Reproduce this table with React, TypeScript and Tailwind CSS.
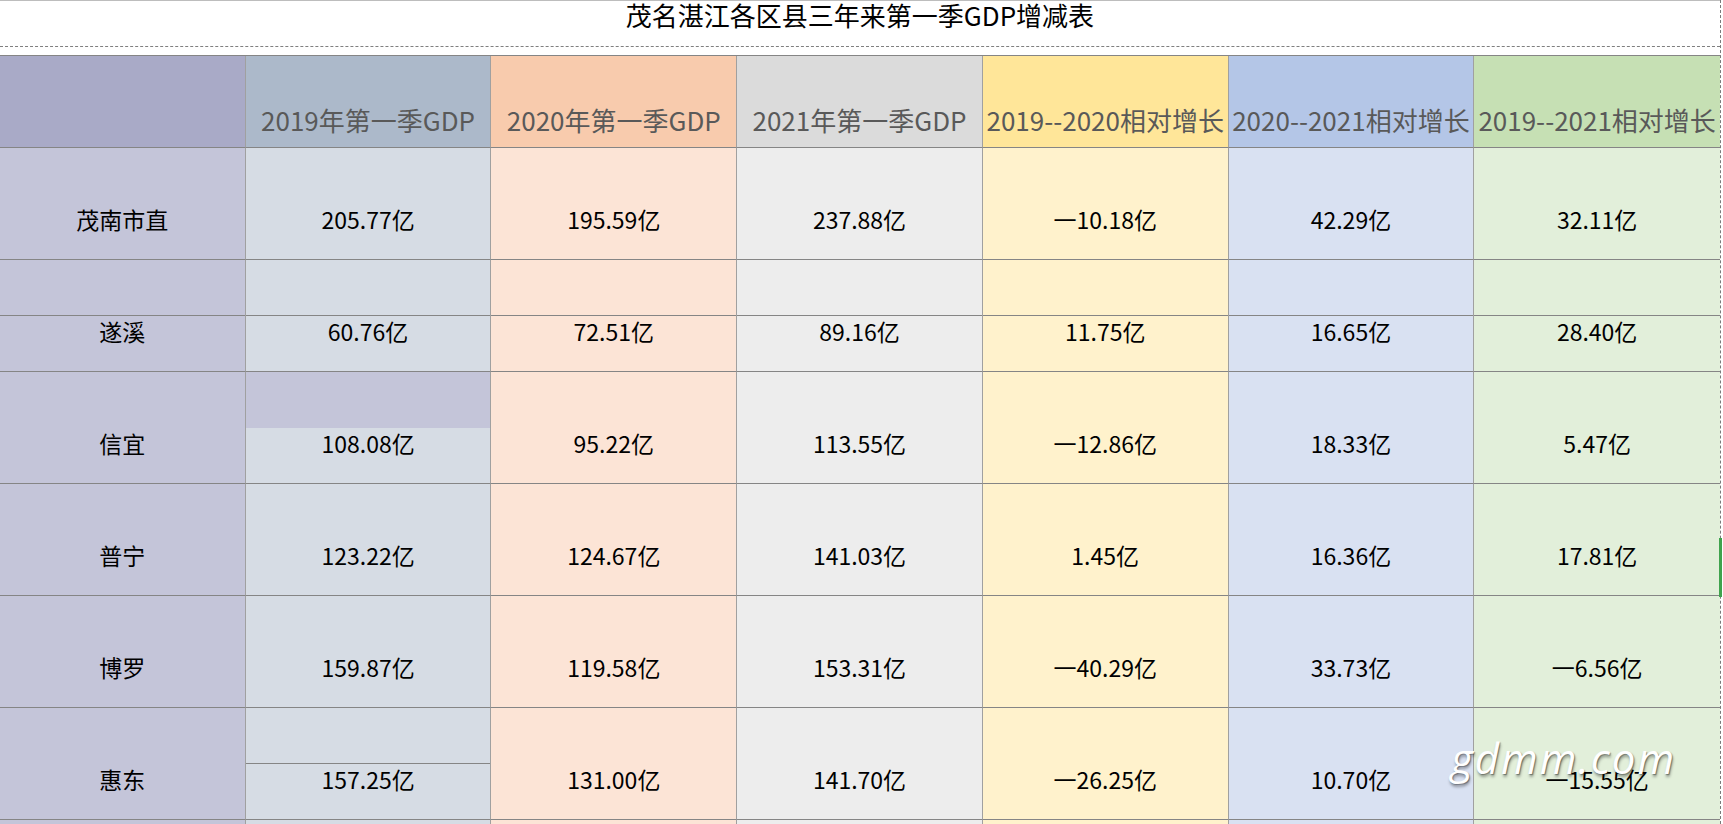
const cols = [
  { head: '', headBg: 'bg-[#a9aac7]', bodyBg: 'bg-[#c4c5d9]' },
  { head: '2019年第一季GDP', headBg: 'bg-[#acb9ca]', bodyBg: 'bg-[#d6dce4]' },
  { head: '2020年第一季GDP', headBg: 'bg-[#f8cbad]', bodyBg: 'bg-[#fce4d6]' },
  { head: '2021年第一季GDP', headBg: 'bg-[#dbdbdb]', bodyBg: 'bg-[#ededed]' },
  { head: '2019--2020相对增长', headBg: 'bg-[#ffe699]', bodyBg: 'bg-[#fff2cc]' },
  { head: '2020--2021相对增长', headBg: 'bg-[#b4c6e7]', bodyBg: 'bg-[#d9e1f2]' },
  { head: '2019--2021相对增长', headBg: 'bg-[#c6e0b4]', bodyBg: 'bg-[#e2efda]' },
];

type Row = {
  cells: string[];
  // which columns get a line halfway down the cell
  splitLine?: number[];
  // columns whose top half is shaded like the first column
  shadeTop?: number[];
};

const rows: Row[] = [
  { cells: ['茂南市直', '205.77亿', '195.59亿', '237.88亿', '一10.18亿', '42.29亿', '32.11亿'] },
  { cells: ['遂溪', '60.76亿', '72.51亿', '89.16亿', '11.75亿', '16.65亿', '28.40亿'], splitLine: [0, 1, 2, 3, 4, 5, 6] },
  { cells: ['信宜', '108.08亿', '95.22亿', '113.55亿', '一12.86亿', '18.33亿', '5.47亿'], shadeTop: [1] },
  { cells: ['普宁', '123.22亿', '124.67亿', '141.03亿', '1.45亿', '16.36亿', '17.81亿'] },
  { cells: ['博罗', '159.87亿', '119.58亿', '153.31亿', '一40.29亿', '33.73亿', '一6.56亿'] },
  { cells: ['惠东', '157.25亿', '131.00亿', '141.70亿', '一26.25亿', '10.70亿', '一15.55亿'], splitLine: [1] },
  { cells: ['', '', '', '', '', '', ''] },
];

function BodyCell({ text, col, split, shade }: { text: string; col: number; split: boolean; shade: boolean }) {
  const last = col === cols.length - 1;
  return (
    <div
      className={`h-[112px] flex flex-col border-b border-b-[#858585] ${last ? '' : 'border-r border-r-[#a0a0a0]'} ${cols[col].bodyBg}`}
    >
      <div
        className={`h-[56px] shrink-0 ${split ? 'border-b border-b-[#858585]' : ''} ${shade ? 'bg-[#c4c5d9]' : ''}`}
      />
      <div className="text-center whitespace-nowrap text-[23px] leading-[30px] text-black">{text}</div>
    </div>
  );
}

export default function App() {
  return (
    <div className="relative w-[1723px] h-[824px] overflow-hidden bg-white font-['Noto_Sans_CJK_SC',sans-serif]">
      <div className="w-[1721px] h-[824px] border-r border-dashed border-r-[#7a7a7a]">
        <div className="h-[46px] border-t border-t-[#bdbdbd] text-center text-[26px] leading-[28px] text-black">
          茂名湛江各区县三年来第一季GDP增减表
        </div>
        <div className="border-t border-dashed border-t-[#7f7f7f]" />
        <div className="h-[8px]" />
        <div className="grid grid-cols-7 border-t border-t-[#858585]">
          {cols.map((c, i) => (
            <div
              key={i}
              className={`h-[92px] pt-[48px] border-b border-b-[#858585] ${i === cols.length - 1 ? '' : 'border-r border-r-[#a0a0a0]'} ${c.headBg}`}
            >
              <div className="text-center whitespace-nowrap text-[26px] leading-[32px] text-[#595959]">{c.head}</div>
            </div>
          ))}
        </div>
        {rows.map((r, ri) => (
          <div key={ri} className="grid grid-cols-7">
            {r.cells.map((t, ci) => (
              <BodyCell
                key={ci}
                text={t}
                col={ci}
                split={!!r.splitLine?.includes(ci)}
                shade={!!r.shadeTop?.includes(ci)}
              />
            ))}
          </div>
        ))}
      </div>
      {/* selection marker on the right edge */}
      <div className="absolute left-[1719px] top-[538px] w-[3px] h-[59px] bg-[#3fa34d]" />
      {/* watermark */}
      <div className="absolute left-[1451px] top-[733px] text-[42px] leading-[50px] italic tracking-[2px] text-white font-['Open_Sans',sans-serif] [text-shadow:1px_1px_1px_rgba(0,0,0,0.35),1px_3px_3px_rgba(0,0,0,0.35)]">
        gdmm.com
      </div>
    </div>
  );
}
